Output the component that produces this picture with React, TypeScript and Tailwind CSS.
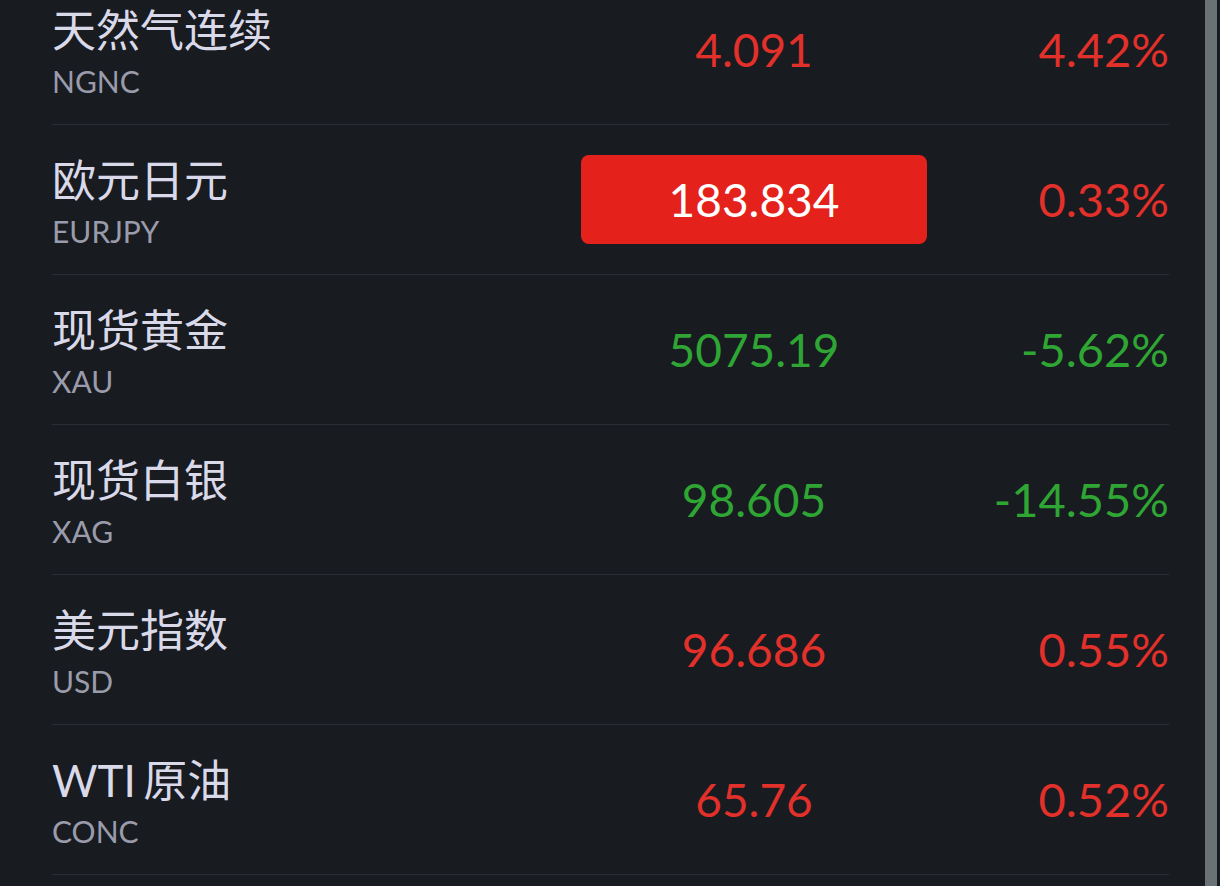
import React from 'react';

type Quote = {
  name: string;
  code: string;
  price: string;
  change: string;
  up: boolean;
  flash?: boolean;
};

const quotes: Quote[] = [
  { name: '天然气连续', code: 'NGNC', price: '4.091', change: '4.42%', up: true },
  { name: '欧元日元', code: 'EURJPY', price: '183.834', change: '0.33%', up: true, flash: true },
  { name: '现货黄金', code: 'XAU', price: '5075.19', change: '-5.62%', up: false },
  { name: '现货白银', code: 'XAG', price: '98.605', change: '-14.55%', up: false },
  { name: '美元指数', code: 'USD', price: '96.686', change: '0.55%', up: true },
  { name: 'WTI 原油', code: 'CONC', price: '65.76', change: '0.52%', up: true },
];

const font = { fontFamily: 'Lato, "Noto Sans CJK SC", sans-serif' };

function QuoteRow({ q }: { q: Quote }) {
  const color = q.up ? 'text-[#e2302a]' : 'text-[#2fa634]';
  return (
    <div className="grid grid-cols-[1fr_346px_242px] h-[150px] border-b border-[#2a2e34]">
      <div className="flex flex-col pt-[30px]">
        <span className="h-[50px] leading-[50px] text-[44px] text-[#d9d9e9] whitespace-pre [word-spacing:-4px]">{q.name}</span>
        <span className="mt-[6px] h-[40px] leading-[40px] text-[30px] text-[#9a9bab]">{q.code}</span>
      </div>
      <div className="flex items-center justify-center">
        {q.flash ? (
          <div className="w-full h-[89px] rounded-lg bg-[#e5211b] flex items-center justify-center text-[46px] text-white">
            {q.price}
          </div>
        ) : (
          <span className={`text-[46px] ${color}`}>{q.price}</span>
        )}
      </div>
      <div className={`flex items-center justify-end text-[47px] ${color}`}>{q.change}</div>
    </div>
  );
}

export default function App() {
  return (
    <div className="relative w-[1220px] h-[886px] overflow-hidden bg-[#181b20]" style={font}>
      <div className="mt-[-25px] pl-[52px] pr-[51px]">
        {quotes.map((q) => (
          <QuoteRow key={q.code} q={q} />
        ))}
      </div>
      {/* scrollbar thumb */}
      <div className="absolute top-0 right-[3px] w-[12px] h-full bg-[#6b7275]" />
    </div>
  );
}
